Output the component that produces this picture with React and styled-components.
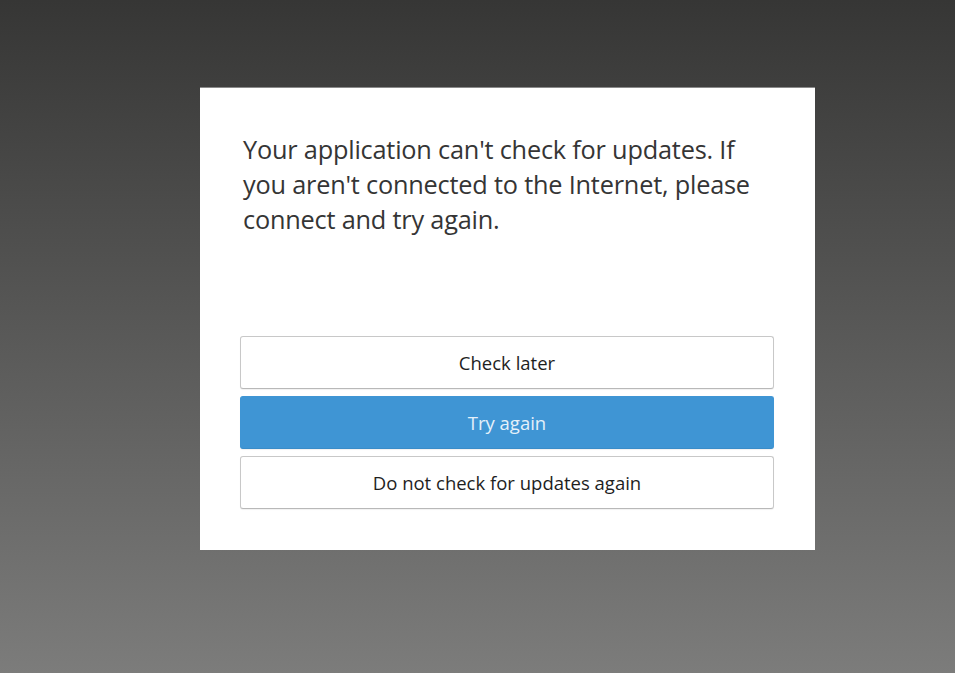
import React from 'react';
import styled, { createGlobalStyle } from 'styled-components';

const GlobalStyle = createGlobalStyle`
  html, body {
    margin: 0;
    padding: 0;
  }

  body {
    font-family: "Open Sans", "Liberation Sans", sans-serif;
  }
`;

const Backdrop = styled.div`
  min-height: 100vh;
  box-sizing: border-box;
  padding: 87px 0 0 200px;
  background: linear-gradient(to bottom, #363635 0%, #7c7c7b 100%);
`;

const Dialog = styled.div`
  width: 615px;
  height: 463px;
  box-sizing: border-box;
  padding: 44px 41px 41px 40px;
  background: #ffffff;
  border-top: 1px solid #8a8a8a;
  display: flex;
  flex-direction: column;
`;

const Message = styled.p`
  margin: 0 0 0 3px;
  max-width: 510px;
  font-size: 25.3px;
  line-height: 35px;
  color: #353535;
  letter-spacing: -0.2px;
`;

const Actions = styled.div`
  margin-top: auto;
  display: flex;
  flex-direction: column;
  gap: 7px;
`;

const Button = styled.button`
  height: 53px;
  width: 100%;
  border-radius: 3px;
  font-family: inherit;
  font-size: 18.5px;
  cursor: pointer;
  border: 1px solid ${(p) => (p.primary ? '#3f95d4' : '#c8c8c8')};
  border-bottom-color: ${(p) => (p.primary ? '#3a8cc8' : '#b8b8b8')};
  box-shadow: 0 1px 1px rgba(0, 0, 0, 0.06);
  background: ${(p) => (p.primary ? '#3f95d4' : '#ffffff')};
  color: ${(p) => (p.primary ? '#e4f0fa' : '#1e1e1e')};
`;

const App = () => {
  return (
    <>
      <GlobalStyle />
      <Backdrop>
        <Dialog>
          <Message>
            Your application can't check for updates. If you aren't connected
            to the Internet, please connect and try again.
          </Message>
          <Actions>
            <Button>Check later</Button>
            <Button primary>Try again</Button>
            <Button>Do not check for updates again</Button>
          </Actions>
        </Dialog>
      </Backdrop>
    </>
  );
};

export default App;
